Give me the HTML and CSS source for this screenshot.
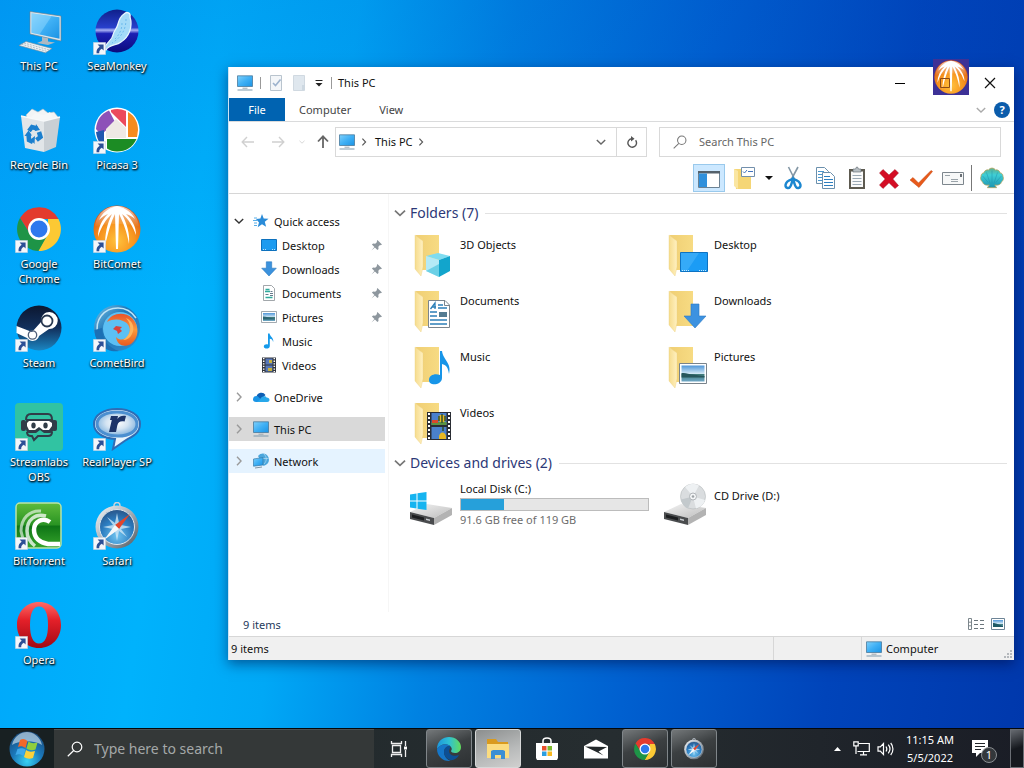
FILE: index.html
```html
<!DOCTYPE html>
<html lang="en">
<head>
<meta charset="utf-8">
<meta name="viewport" content="width=device-width, initial-scale=1">
<title>This PC</title>
<link rel="stylesheet" href="styles.css">
</head>
<body>
<svg class="sprites" aria-hidden="true">
  <defs>
    <linearGradient id="gScreen" x1="0" y1="0" x2="1" y2="1"><stop offset="0" stop-color="#7fd0fb"/><stop offset=".5" stop-color="#3fb0f5"/><stop offset="1" stop-color="#1c93e4"/></linearGradient>
    <linearGradient id="gFolder" x1="0" y1="0" x2="1" y2="0"><stop offset="0" stop-color="#f0cf74"/><stop offset="1" stop-color="#f7db83"/></linearGradient>
    <linearGradient id="gFlap" x1="0" y1="0" x2="1" y2="0"><stop offset="0" stop-color="#f6dc8d"/><stop offset="1" stop-color="#fff0c0"/></linearGradient>
    <radialGradient id="gComet" cx=".5" cy=".75" r=".75"><stop offset="0" stop-color="#ffc23c"/><stop offset=".5" stop-color="#f7941f"/><stop offset="1" stop-color="#d0480f"/></radialGradient>
    <linearGradient id="gGlow" x1="0" y1="0" x2="0" y2="1"><stop offset="0" stop-color="#fff" stop-opacity=".75"/><stop offset="1" stop-color="#fff" stop-opacity="0"/></linearGradient>
    <linearGradient id="gSea" x1="0" y1="0" x2="0" y2="1"><stop offset="0" stop-color="#0f1f8a"/><stop offset=".42" stop-color="#2840cc"/><stop offset=".48" stop-color="#a9b2f4"/><stop offset=".56" stop-color="#1c1fb4"/><stop offset="1" stop-color="#0b0a7c"/></linearGradient>
    <linearGradient id="gSteam" x1="0" y1="0" x2="0" y2="1"><stop offset="0" stop-color="#0c1730"/><stop offset=".5" stop-color="#12305c"/><stop offset="1" stop-color="#1b86c2"/></linearGradient>
    <linearGradient id="gOpera" x1="0" y1="0" x2="0" y2="1"><stop offset="0" stop-color="#ff6a66"/><stop offset=".4" stop-color="#e32029"/><stop offset="1" stop-color="#a00914"/></linearGradient>
    <linearGradient id="gBt" x1="0" y1="0" x2="0" y2="1"><stop offset="0" stop-color="#5ebb3c"/><stop offset=".48" stop-color="#2a9423"/><stop offset=".52" stop-color="#0e7516"/><stop offset="1" stop-color="#37a52c"/></linearGradient>
    <radialGradient id="gReal" cx=".5" cy=".45" r=".55"><stop offset="0" stop-color="#ffffff"/><stop offset=".5" stop-color="#d4e4f2"/><stop offset="1" stop-color="#7fb2de"/></radialGradient>
    <radialGradient id="gSaf" cx=".5" cy=".75" r=".75"><stop offset="0" stop-color="#6fc4f0"/><stop offset=".6" stop-color="#2b7cc0"/><stop offset="1" stop-color="#2a5588"/></radialGradient>
    <linearGradient id="gMetal" x1="0" y1="0" x2="1" y2="1"><stop offset="0" stop-color="#f6f8fa"/><stop offset=".5" stop-color="#a6aeb6"/><stop offset="1" stop-color="#4c545c"/></linearGradient>
    <linearGradient id="gBird" x1="0" y1="0" x2="1" y2="1"><stop offset="0" stop-color="#7ac4ea"/><stop offset=".4" stop-color="#1f78b8"/><stop offset="1" stop-color="#2f8fd0"/></linearGradient>
    <linearGradient id="gFlame" x1="0" y1="0" x2="0" y2="1"><stop offset="0" stop-color="#e8542a"/><stop offset=".5" stop-color="#fb9a3c"/><stop offset="1" stop-color="#e85a20"/></linearGradient>
    <radialGradient id="gStart" cx=".5" cy=".85" r=".85"><stop offset="0" stop-color="#39d2f4"/><stop offset=".5" stop-color="#1a76b8"/><stop offset="1" stop-color="#1a4a7a"/></radialGradient>
    <linearGradient id="gDrive" x1="0" y1="0" x2="1" y2="1"><stop offset="0" stop-color="#f3f3f3"/><stop offset="1" stop-color="#bdbdbd"/></linearGradient>
    <linearGradient id="gShell" x1="0" y1="0" x2="0" y2="1"><stop offset="0" stop-color="#5fae8c"/><stop offset=".35" stop-color="#3fcfd6"/><stop offset="1" stop-color="#1d93b0"/></linearGradient>
    <linearGradient id="gEdge" x1="0" y1="0" x2="1" y2="0"><stop offset="0" stop-color="#1c96dc"/><stop offset=".5" stop-color="#2fc0d4"/><stop offset="1" stop-color="#62dc5c"/></linearGradient>
    <linearGradient id="gPhoto" x1="0" y1="0" x2="0" y2="1"><stop offset="0" stop-color="#4f96d8"/><stop offset=".5" stop-color="#cfe6f4"/><stop offset=".55" stop-color="#3f7a78"/><stop offset="1" stop-color="#6fa8c8"/></linearGradient>
  </defs>

  <symbol id="shortcut" viewBox="0 0 14 14"><path fill="#f4f6fa" stroke="#c8d0dc" stroke-width=".6" d="M.5.5h13v13H.5z"/><path fill="#2c4f96" d="M5 2.800h6.400v6.400L9.500 7.300C7.600 8.200 6.600 9.500 6.700 12H3.800C3.500 8.800 4.800 6.800 7.200 5.200z"/></symbol>

  <symbol id="pc-desk" viewBox="0 0 48 48">
    <path fill="#dfe6ea" stroke="#6c7a86" stroke-width=".6" d="M15 4.500 46 9v25L15 27z"/><path fill="url(#gScreen)" d="m16.500 6.300 28 4v21.500l-28-6z"/><path fill="#9adcff" opacity=".45" d="m16.500 6.300 20 2.900-12 18.300-8-1.700z"/>
    <path fill="#aeb9c2" d="m27 30 6 1.300v3.200l7 1-7 2.500-11-2 5-2z"/><path fill="#eef2f4" stroke="#7e8c98" stroke-width=".6" d="m11 34.500 26 7-6.500 4.300L4 38.500z"/><path fill="none" stroke="#93a2ae" stroke-width=".7" stroke-dasharray="2 1" d="m9 36 25.500 7M6.500 37.200 32 44.400"/>
  </symbol>
  <symbol id="bin" viewBox="0 0 48 48">
    <path fill="#f2f4f5" stroke="#b4bcc2" stroke-width=".6" d="m11 9 6-6 6 3 5-3 5 4 6-1 4 5-5 5H14z"/><path fill="#e1e5e8" d="M6 10 10 42l19 4V15z"/><path fill="#c9cfd4" d="m29 15 16-4-4 30-12 5z"/><path fill="none" stroke="#f7f9fa" stroke-width="1.500" d="m6 10 23 5 16-4"/><path fill="#f5f7f8" d="m15 12 5-5 9 2 6-3 3 6-9 2z"/>
    <g fill="none" stroke="#1b7fce" stroke-width="4.500"><path d="m14 25 3-4 5 1.500"/><path d="m24 26 1.500 5-4 3"/><path d="m18 36-4-2-.5-6"/></g>
    <path fill="#1b7fce" d="m21 18 4 6-5 1zM20 30l-.5 8-4-4.500zM9.500 30l4-5.500 3.500 5z"/>
  </symbol>
  <symbol id="seamonkey" viewBox="0 0 48 48"><circle cx="24" cy="24" r="21.500" fill="url(#gSea)"/><path fill="#a4daf8" stroke="#e9f7ff" stroke-width="1.300" d="M31 7c3-3 7-1 6 3 3 10-1 20-9 25-5 4-12 2-15 8l-2-1c2-7 8-8 9-14 1-5 4-6 5-11 1-4 3-8 6-10z"/><path fill="none" stroke="#5fb2ea" stroke-width=".8" stroke-dasharray="2 2" d="M33 12c0 10-4 18-14 24M29 16c0 7-3 12-7 16"/></symbol>
  <symbol id="picasa" viewBox="0 0 48 48"><circle cx="24" cy="24" r="22.500" fill="#fff"/><path fill="#8d51b8" d="M3 23C3.500 14 9 7 16 4.500l6 11.500L8 29z"/><path fill="#ec4a5c" d="M18 4a21 21 0 0 1 15 1v16L18 6z"/><path fill="#f58b1f" d="M35 6c7 4 10 11 10 18l-1 7h-9z"/><path fill="#1c8c24" d="M43.500 33C40 41 33 45.500 24 45.500c-4 0-7-1-10-3V33z"/><path fill="#2057b0" d="M3 26c1 7 3 11 8 15V24z"/><path fill="#efe9e4" d="m23 13 10 9v10H13V23z"/></symbol>
  <symbol id="chrome" viewBox="0 0 48 48"><path fill="#e33b2e" d="M5 13A22 22 0 0 1 43.500 14H24v10l-9 5z"/><path fill="#fcc934" d="M43.500 14A22 22 0 0 1 23 46l10-17V14z"/><path fill="#1e9447" d="M5 13a22 22 0 0 0 18.500 33L33 29l-9 4-9-4z"/><circle cx="24" cy="24" r="11" fill="#fff"/><circle cx="24" cy="24" r="8.500" fill="#2d78ee"/></symbol>
  <symbol id="bitcomet" viewBox="0 0 48 48"><circle cx="24" cy="24" r="23.500" fill="url(#gComet)"/><path fill="url(#gGlow)" d="M2 22C3 9 13 1 24 1s21 8 22 21c-8-4-36-4-44 0z"/><path fill="#fff" d="M24 1C15 3 9 8 6 15c3-3 6-5 9-6C9 15 5 22 5 32 8 22 13 14 19 9c-5 10-7 20-7 32 3-13 6-24 10-32l1 35h2l1-35c4 8 8 18 10 30 1-10-2-20-7-30 7 5 11 13 14 21 0-9-4-15-10-21 4 1 7 3 9 5C39 8 33 3 24 1z"/></symbol>
  <symbol id="steam" viewBox="0 0 48 48"><circle cx="24" cy="24" r="22.500" fill="url(#gSteam)"/><path fill="#fff" d="M1.500 22 17 28l9-10c0-7 4-10 8.500-10A8.500 8.500 0 0 1 34 25l-10 7c-1 5-8 7-12 2L1.500 29z"/><circle cx="32" cy="17" r="5.500" fill="#fff" stroke="#283850" stroke-width="1.800"/><circle cx="17.500" cy="31" r="4.200" fill="none" stroke="#52617a" stroke-width="1.300"/></symbol>
  <symbol id="cometbird" viewBox="0 0 48 48"><circle cx="24" cy="24" r="23" fill="url(#gBird)"/><circle cx="27" cy="25" r="17" fill="#5cc0f4"/><path fill="none" stroke="#bfe4f6" stroke-width="1.500" d="M5 30C1 16 11 4 25 4c8 0 14 4 18 10"/><path fill="#1c70b4" d="M9 24c0 12 7 20 17 23C14 49 2 40 1.500 26z"/><path fill="url(#gFlame)" d="M14 18C18 9 31 7 39 14c8 8 7 20-1 26-7 4-14 1-15-7 4 4 9 3 12-1 4-6 1-13-5-15-5-2-10-2-16 1z"/><path fill="#d8423c" d="m20 25 3-3 6 1-2 2 2 2-4 3-1-3z"/><path fill="#ffb45c" d="M33 14c7 3 9 10 6 16-2 4-5 6-9 6 8-5 10-14 3-22z"/></symbol>
  <symbol id="slobs" viewBox="0 0 48 48"><rect width="48" height="48" rx="4" fill="#31c3a2"/><path fill="none" stroke="#303c48" stroke-width="2" d="M11 17c0-4 2-6 5-6h17c3 0 4 2 4 6M12 29c0 3 2 4 4 4h1l2 4 4-4h10c3 0 4-2 4-4"/><path fill="#303c48" d="M12 16h24c2 0 3 1 3 3v6c0 3-2 5-5 5h-5l-4-3-4 3h-6c-3 0-4-2-4-5v-6c0-2 0-3 1-3z"/><rect x="6" y="17" width="5" height="11" rx="2" fill="#303c48"/><rect x="37" y="17" width="5" height="11" rx="2" fill="#303c48"/><path fill="#fff" d="M14 18h20l3 2v3l-3 4h-6l-4-3-4 3h-6l-2-4v-3z"/><ellipse cx="18.500" cy="22.500" rx="2.200" ry="3" fill="#303c48"/><ellipse cx="30.500" cy="22.500" rx="2.200" ry="3" fill="#303c48"/></symbol>
  <symbol id="realplayer" viewBox="0 0 48 48"><path fill="#e9f4fc" stroke="#2f6cb4" stroke-width="2" d="M24 6c13 0 23 6 23 15 0 9-7 12-14 16l-13 9 2-10C9 35 1 29 1 21 1 12 11 6 24 6z"/><path fill="url(#gReal)" stroke="#4b8fd0" stroke-width="3" d="M24 9c12 0 20 5 20 12s-7 12-19 12S4 28 4 21 12 9 24 9z"/><path fill="#1c3368" d="M18 13h7l-.6 3c2-3 5-3.700 8.600-3l-1.400 5.500c-4-.8-6.300 0-7.300 4L23 29h-7l2.800-12H17z"/></symbol>
  <symbol id="bittorrent" viewBox="0 0 48 48"><rect x="1" y="1" width="45" height="45" rx="4" fill="url(#gBt)" stroke="#b9e4a8" stroke-width="1.500"/><g fill="none" stroke="#fff"><path stroke-width="4.500" d="M35 20c-7-5-16-1-16 8 0 8 6 13 14 14h12"/><path stroke-width="3.500" opacity=".75" d="M31 14C20 11 12 18 12 29c0 7 3 11 8 15"/><path stroke-width="3" opacity=".6" d="M26 9C14 8 6 17 6 29l2 8"/></g></symbol>
  <symbol id="safari" viewBox="0 0 48 48"><circle cx="24" cy="3.500" r="3" fill="none" stroke="#c9d2da" stroke-width="1.500"/><circle cx="24" cy="25" r="21.500" fill="url(#gMetal)"/><circle cx="24" cy="25" r="17.500" fill="url(#gSaf)" stroke="#dfe7ee"/><path fill="#cfe7f6" opacity=".8" d="m24 11 2 10 8-6-6 8 10 2-10 2 6 8-8-6-2 10-2-10-8 6 6-8-10-2 10-2-6-8 8 6z"/><path fill="#e3452c" d="m37 12-11 15-4-4z"/><path fill="#f5f8fa" d="m11 38 11-15 4 4z"/></symbol>
  <symbol id="opera" viewBox="0 0 48 48"><path fill="url(#gOpera)" fill-rule="evenodd" d="M24 1C11 1 2 11 2 24s9 23 22 23 22-10 22-23S37 1 24 1zm0 4.500c6 0 9 7 9 18.500s-3 18.500-9 18.500-9-7-9-18.500 3-18.500 9-18.500z"/></symbol>

  <symbol id="monitor" viewBox="0 0 18 16"><path fill="url(#gScreen)" stroke="#4a7a9c" stroke-width=".8" d="M1.500.8h15v10.700h-15z"/><path stroke="#9aa6ae" d="M6.500 13.200h5"/><path stroke="#7d99ac" d="M1.500 15h15"/></symbol>
  <symbol id="star" viewBox="0 0 16 16"><path fill="#2a8bd8" d="m9 1 1.700 4.500 4.800.3-3.700 3 1.300 4.900L9 11.200l-4.300 3L6 9.500 3 6l4.400-.5z"/><path stroke="#58aee8" d="M1 5h3M0 7.500h4M1 10h3M1 12.500h3"/></symbol>
  <symbol id="s-desktop" viewBox="0 0 16 16"><path fill="#1c9bf0" stroke="#0d71bd" d="M.5 2.500h15v11H.5z"/><path stroke="#bfe3fb" stroke-dasharray="1 1" d="M2 12.500h3M11 12.500h3"/></symbol>
  <symbol id="s-down" viewBox="0 0 16 16"><path fill="#3b92dd" stroke="#2878c0" stroke-width=".6" d="M5.300.8h5.400v6.400h4.600L8 15 .7 7.200h4.600z"/></symbol>
  <symbol id="s-doc" viewBox="0 0 16 16"><path fill="#fff" stroke="#8a9096" stroke-width=".8" d="M2.500.5h8l3 3v12h-11z"/><path stroke="#2faa9c" stroke-width="1.300" d="M4.500 4.500h4M4 6.500h5M4.500 12.500h7"/><path stroke="#667a8c" d="M4.500 9.500h3M9 8.500h3M9 10.500h3M9.500 6.500h2"/></symbol>
  <symbol id="s-pic" viewBox="0 0 16 16"><path fill="#fff" stroke="#8a949c" stroke-width=".8" d="M.5 2.500h15v11H.5z"/><path fill="url(#gPhoto)" d="M2 4h12v8H2z"/><path fill="#2c6674" d="M2 7.500c3 0 4 1 12 2v1H2z"/></symbol>
  <symbol id="s-music" viewBox="0 0 16 16"><path fill="#159aeb" d="M7 .5h1.600c.3 3 4.600 4.500 3.500 8.500-.4-2.200-1.600-3-3.300-3.200V13c0 3.400-6 3.300-6 .5 0-2 2.400-2.800 4.200-2z"/></symbol>
  <symbol id="s-video" viewBox="0 0 16 16"><path fill="#30343c" d="M1 .5h14v15H1z"/><path stroke="#fff" stroke-width="1.500" stroke-dasharray="1.300 1.300" d="M2.700 1v14M13.300 1v14"/><path fill="#5878b8" d="M4.500 1.500h7v6h-7zM4.500 8.500h7v6h-7z"/><path fill="#c8b23c" d="M8 3h3v3H8zM7 11h4v3H7z"/></symbol>
  <symbol id="onedrive" viewBox="0 0 18 16"><path fill="#0e5fb4" d="M4.500 7.500A5 5 0 0 1 13.500 6l-5 5z"/><path fill="#1a94e6" d="M1 10.500C1 7.800 3 6.500 5.500 7l6 6H4c-2 0-3-1-3-2.500z"/><path fill="#28a8ea" d="M8 10.500c1.500-4 6-4 6.500-2 2 0 3 1 3 2.500 0 1.300-1 2-2.300 2H5z"/></symbol>
  <symbol id="network" viewBox="0 0 18 16"><path fill="#4ba6dc" d="M6 3c3-4 9-3 10.500 1.500s-1 7-5 8.500z"/><path stroke="#b7def4" fill="none" stroke-width=".7" d="M9 5.500h7.500M12 1c3 3 3 7 0 10"/><path fill="url(#gScreen)" stroke="#3b7ba8" stroke-width=".7" d="M1.500 6 11 4.500V12l-9.500 1.200z"/><path stroke="#8395a2" d="m3 15 7-1"/></symbol>
  <symbol id="pin" viewBox="0 0 12 12"><path fill="#8e979e" d="m7 0 5 5-1.500.7-.7-.3-1.800 2 .2 2.300L7 11 4.300 8.300.5 11.500 3.700 7.700 1 5l1.300-1.200 2.300.2 2-1.800-.3-.8z"/></symbol>
  <symbol id="chev-r" viewBox="0 0 10 10"><path fill="none" stroke="currentColor" stroke-width="1.400" d="m3 .8 4 4.200-4 4.200"/></symbol>
  <symbol id="chev-d" viewBox="0 0 10 10"><path fill="none" stroke="currentColor" stroke-width="1.400" d="m.8 3 4.200 4 4.200-4"/></symbol>
  <symbol id="glass" viewBox="0 0 16 16"><circle cx="10" cy="6" r="4.800" fill="none" stroke="currentColor" stroke-width="1.200"/><path stroke="currentColor" stroke-width="1.200" d="M6.700 9.500.8 15.200"/></symbol>

  <symbol id="folder" viewBox="0 0 48 48"><path fill="url(#gFolder)" d="M7 4h23v35H12z"/><path fill="url(#gFlap)" stroke="#ecd082" stroke-width=".4" d="m6 4 8 6v26l-2 9-6-7z"/></symbol>
  <symbol id="f-3d" viewBox="0 0 48 48"><use href="#folder"/><path fill="#7fdcf0" d="m17 25 12-3 12 3-11 4z"/><path fill="#b4eaf6" d="m17 25 13 4v17l-13-6z"/><path fill="#12a5cc" d="m41 25-11 4v17l11-6z"/><path fill="#4cc4e0" opacity=".7" d="m17 40 13-7v13z"/></symbol>
  <symbol id="f-doc" viewBox="0 0 48 48"><use href="#folder"/><path fill="#fff" stroke="#7b858d" d="M19.500 13.500H36l4.500 4.500v22.500h-21z"/><path fill="none" stroke="#7b858d" d="M35.500 13.500v5h5"/><path fill="none" stroke="#2c7fb8" stroke-width="1.300" d="m21.500 22 4.500-6v6m-3-2h4M29 18h5M29 21h9M21 25h7M21 29h7M21 33h17M21 37h17"/><path fill="#557c92" d="M30 25h8v5h-8z"/></symbol>
  <symbol id="f-music" viewBox="0 0 48 48"><use href="#folder"/><path fill="#1795e8" d="M31 8h2c1 9 10 12 7 23-1-7-3-9-7-10v14c0 7-13 9-13 2 0-5 6-7 11-5z"/></symbol>
  <symbol id="f-video" viewBox="0 0 48 48"><use href="#folder"/><path fill="#2a2d34" d="M18 13h24v28H18z"/><path stroke="#fff" stroke-width="2" stroke-dasharray="2 2" d="M20 14v26M40 14v26"/><path fill="#4a80cc" d="M22.500 14h15v12h-15zM22.500 28h15v12h-15z"/><path fill="#5b9444" d="M22.500 23h15v3h-15z"/><circle cx="33" cy="19.500" r="3.800" fill="#e8b822"/><path stroke="#31502c" stroke-width="1.500" d="M33 15v9M30 17v5M36 17v5M34 28v4"/><path fill="#d8482c" d="M23 21h6v3h-6z"/><path fill="#e8b822" d="M30 38c0-6 7-6 7 0v2h-7z"/></symbol>
  <symbol id="f-desk" viewBox="0 0 48 48"><use href="#folder"/><path fill="#1b9cf5" stroke="#0d72c2" d="M17.500 21.500h27v19h-27z"/><path fill="#4fb7fb" opacity=".5" d="M18 22h18L24 40h-6z"/><path stroke="#c9e9fc" stroke-dasharray="1 1" d="M19 39.500h8M36 39.500h8"/></symbol>
  <symbol id="f-down" viewBox="0 0 48 48"><use href="#folder"/><path fill="#3d92e0" stroke="#2c78c4" stroke-width=".6" d="M28 17h8v12h7L32 41 21 29h7z"/></symbol>
  <symbol id="f-pic" viewBox="0 0 48 48"><use href="#folder"/><path fill="#fff" stroke="#79838b" d="M16.500 20.500h27v20h-27z"/><path fill="url(#gPhoto)" d="M18.500 22.500h23v16h-23z"/><path fill="#27575c" d="M18.500 30c6 0 10 2 23 3v1.500h-23z"/></symbol>
  <symbol id="drive-body" viewBox="0 0 48 48"><path fill="url(#gDrive)" d="m1 31 17-8 25 4-18 10z"/><path fill="#4a4c4e" d="m1 31 24 6v7L1 38z"/><path fill="#b3b3b3" d="m25 37 18-10v7L25 44z"/><path fill="#1c1e20" d="m3 33.500 12 3v3l-12-3z"/><path fill="#c8ccd0" d="m17 37.500 4 1v1.500l-4-1z"/></symbol>
  <symbol id="d-local" viewBox="0 0 48 48"><use href="#drive-body"/><path fill="#16b4f0" d="m1 13.500 6.500-1v7H1zM8.500 12.300l9-1.300v8.500h-9zM1 20.500h6.500v7L1 26.500zM8.500 20.500h9V29l-9-1.300z"/></symbol>
  <symbol id="d-cd" viewBox="0 0 48 48"><use href="#drive-body"/><circle cx="30" cy="15.500" r="12.500" fill="#dadddf" stroke="#b4b8bb" stroke-width=".6"/><path fill="#eef1f3" d="M30 15.500 22 6a12.500 12.500 0 0 1 14-1.500zM30 15.500 42 19a12.500 12.500 0 0 1-9 8.500z"/><path fill="#c3c9cc" d="m30 15.500-12 3c1 5 4 8 7 9z"/><circle cx="30" cy="15.500" r="3.500" fill="#f4f6f7" stroke="#b0b4b8"/><circle cx="30" cy="15.500" r="1.300" fill="#9da2a6"/></symbol>

  <symbol id="t-pane" viewBox="0 0 24 24"><path fill="#fff" stroke="#6b8294" d="M1.500 5.500h21v16h-21z"/><path fill="#54616b" d="M1 5h22v2.500H1z"/><path fill="#2f90dc" d="M2 7.500h8V21H2z"/></symbol>
  <symbol id="t-folder" viewBox="0 0 24 24"><path fill="#f5d676" d="M1 3h7v7h10v13H3z"/><path fill="#fae6a2" d="m1 3 4 2v18l-4-3z"/><path fill="#fff" stroke="#7390ac" d="M8.500 1.500h13v9h-13z"/><path fill="none" stroke="#4474c0" d="m10 5.500 1.500 1.500L14 4M15 5.500h5"/></symbol>
  <symbol id="t-cut" viewBox="0 0 24 24"><path fill="none" stroke="#8497a5" stroke-width="1.600" d="M7.500 1 14 14M17 1l-7 13"/><path fill="none" stroke="#1c87d0" stroke-width="2.400" d="M12 13c-3 1-7 2-7.500 6-.2 3 3 4 4.500 2 1.500-1.700 1.500-4 3-8 1.500 4 1.500 6.300 3 8 1.500 2 4.700 1 4.500-2-.5-4-4.500-5-7.500-6z"/></symbol>
  <symbol id="t-copy" viewBox="0 0 24 24"><path fill="#fff" stroke="#6b90ad" d="M3.500 1.500h8l4 4v12h-12z"/><path stroke="#4a98d0" d="M5 5.500h6M5 8.500h8M5 11.500h8M5 14.500h8"/><path fill="#fff" stroke="#6b90ad" d="M9.500 6.500h8l4 4v12h-12z"/><path stroke="#2c7fc0" d="M11 10.500h6M11 13.500h9M11 16.500h9M11 19.500h9"/></symbol>
  <symbol id="t-paste" viewBox="0 0 24 24"><path fill="#5d5a50" d="M4 3h16v20H4z"/><path fill="#fafafa" d="M6 5.500h12V21H6z"/><path fill="#b8bfc4" stroke="#5d656b" stroke-width=".6" d="M8 3h2.500l1-2h1l1 2H16v3H8z"/><path stroke="#9ba9b4" d="M7.500 9.500h9M7.500 12.500h9M7.500 15.500h9M7.500 18.500h9"/></symbol>
  <symbol id="t-del" viewBox="0 0 24 24"><path fill="#d40d24" stroke="#a00c20" stroke-width=".5" d="M6 3.500 12 9l6-5.500L21.500 7l-5.700 6 5.700 6.500-3.500 3-6-5.700-6 5.700L2.500 19l5.700-6-5.700-6z"/></symbol>
  <symbol id="t-ok" viewBox="0 0 24 24"><path fill="#e85a1a" stroke="#c04410" stroke-width=".5" d="M1 14 4 11.500l5.500 5.500L22 4.500l1.500 1L10 21.500z"/></symbol>
  <symbol id="t-mail" viewBox="0 0 24 24"><path fill="#f7f8f8" stroke="#7d868d" d="M1.500 6.500h21v12h-21z"/><path stroke="#9aa3a9" d="M4 9.500h5M10 13.500h7M10 15.500h7"/><path fill="#6a7076" d="M19 8h2v3h-2z"/></symbol>
  <symbol id="t-shell" viewBox="0 0 26 26"><path fill="url(#gShell)" stroke="#b9a45c" stroke-width=".8" d="m8 23.500 2-3c-4 1-7-1-7-3-2-1-3-4-2-6 0-3 2-4 3-4 1-3 4-4 5-3 2-3 6-3 8 0 1-1 4 0 5 3 1 0 3 1 3 4 1 2 0 5-2 6 0 2-3 4-7 3l2 3z"/><path stroke="#1c8fa8" fill="none" stroke-width=".7" opacity=".7" d="M13 19V5M11 19 7 7M15 19l4-12M9 18l-6-7M17 18l6-7"/></symbol>
</svg>

<main class="desktop">
  <nav class="shortcuts" aria-label="Desktop icons">
    <a class="shortcut" href="#"><svg class="shortcut-art"><use href="#pc-desk"/></svg>This PC</a>
    <a class="shortcut" href="#"><svg class="shortcut-art"><use href="#bin"/></svg>Recycle Bin</a>
    <a class="shortcut" href="#"><svg class="shortcut-art"><use href="#chrome"/></svg><svg class="arrow"><use href="#shortcut"/></svg>Google Chrome</a>
    <a class="shortcut" href="#"><svg class="shortcut-art"><use href="#steam"/></svg><svg class="arrow"><use href="#shortcut"/></svg>Steam</a>
    <a class="shortcut" href="#"><svg class="shortcut-art"><use href="#slobs"/></svg><svg class="arrow"><use href="#shortcut"/></svg>Streamlabs OBS</a>
    <a class="shortcut" href="#"><svg class="shortcut-art"><use href="#bittorrent"/></svg><svg class="arrow"><use href="#shortcut"/></svg>BitTorrent</a>
    <a class="shortcut" href="#"><svg class="shortcut-art"><use href="#opera"/></svg><svg class="arrow"><use href="#shortcut"/></svg>Opera</a>
    <a class="shortcut" href="#"><svg class="shortcut-art"><use href="#seamonkey"/></svg><svg class="arrow"><use href="#shortcut"/></svg>SeaMonkey</a>
    <a class="shortcut" href="#"><svg class="shortcut-art"><use href="#picasa"/></svg><svg class="arrow"><use href="#shortcut"/></svg>Picasa 3</a>
    <a class="shortcut" href="#"><svg class="shortcut-art"><use href="#bitcomet"/></svg><svg class="arrow"><use href="#shortcut"/></svg>BitComet</a>
    <a class="shortcut" href="#"><svg class="shortcut-art"><use href="#cometbird"/></svg><svg class="arrow"><use href="#shortcut"/></svg>CometBird</a>
    <a class="shortcut" href="#"><svg class="shortcut-art"><use href="#realplayer"/></svg><svg class="arrow"><use href="#shortcut"/></svg>RealPlayer SP</a>
    <a class="shortcut" href="#"><svg class="shortcut-art"><use href="#safari"/></svg><svg class="arrow"><use href="#shortcut"/></svg>Safari</a>
  </nav>

  <section class="window" aria-label="This PC">
    <header class="titlebar">
      <svg class="icon-pc"><use href="#monitor"/></svg>
      <span class="bar"></span>
      <button class="quick" aria-label="Properties"><svg width="14" height="16" viewBox="0 0 14 16"><path fill="#f3f6f9" stroke="#b9c4ce" d="M1.500.5h11v15h-11z"/><path fill="none" stroke="#9db3ce" stroke-width="1.600" d="m4 8 2.500 2.500 5-6"/></svg></button>
      <button class="quick" aria-label="New folder"><svg width="14" height="16" viewBox="0 0 14 16"><path fill="#dfe7ee" stroke="#d0d9e1" d="M1.500.5h11v15h-11z"/><path fill="#cdd8e1" d="M10 10h3v5h-3z"/></svg></button>
      <button class="quick quick-more" aria-label="Customize toolbar"><svg width="8" height="8" viewBox="0 0 8 8"><path stroke="#222" d="M.5 1.500h7"/><path fill="#222" d="M.5 4h7L4 7.500z"/></svg></button>
      <span class="bar"></span>
      <h1 class="title">This PC</h1>
      <div class="controls">
        <button class="control" aria-label="Minimize"><svg width="10" height="10" viewBox="0 0 10 10"><path stroke="#000" d="M0 5.500h10"/></svg></button>
        <button class="control control-max" aria-label="Maximize"><span class="dropzone"><svg width="34" height="34"><use href="#bitcomet"/></svg></span><svg class="max-glyph" width="10" height="10" viewBox="0 0 10 10"><path fill="none" stroke="#8a4a18" d="M.5.5h9v9h-9z"/></svg></button>
        <button class="control" aria-label="Close"><svg width="12" height="12" viewBox="0 0 12 12"><path stroke="#111" stroke-width="1.200" d="m1 1 10 10M11 1 1 11"/></svg></button>
      </div>
    </header>

    <div class="tabs">
      <button class="tab tab-file">File</button>
      <button class="tab">Computer</button>
      <button class="tab">View</button>
      <div class="tabs-end">
        <button class="plain faint" aria-label="Expand ribbon"><svg width="10" height="10"><use href="#chev-d"/></svg></button>
        <button class="plain help" aria-label="Help">?</button>
      </div>
    </div>

    <div class="navbar">
      <button class="step off" aria-label="Back"><svg width="14" height="12" viewBox="0 0 14 12"><path fill="none" stroke="currentColor" stroke-width="1.400" d="M13 6H1.500M6 1 1.200 6 6 11"/></svg></button>
      <button class="step off" aria-label="Forward"><svg width="14" height="12" viewBox="0 0 14 12"><path fill="none" stroke="currentColor" stroke-width="1.400" d="M1 6h11.500M8 1l4.800 5L8 11"/></svg></button>
      <button class="step step-small off" aria-label="Recent"><svg width="6" height="6"><use href="#chev-d"/></svg></button>
      <button class="step step-up" aria-label="Up"><svg width="12" height="13" viewBox="0 0 12 13"><path fill="none" stroke="currentColor" stroke-width="1.800" d="M6 13V1.500M1 6.500 6 1.300l5 5.200"/></svg></button>
      <div class="address">
        <svg class="icon-pc"><use href="#monitor"/></svg>
        <svg class="sep" width="8" height="8"><use href="#chev-r"/></svg>
        <a class="crumb" href="#">This PC</a>
        <svg class="sep" width="8" height="8"><use href="#chev-r"/></svg>
        <button class="plain history" aria-label="Previous locations"><svg width="10" height="10"><use href="#chev-d"/></svg></button>
        <button class="plain refresh" aria-label="Refresh"><svg width="12" height="12" viewBox="0 0 12 12"><path fill="none" stroke="currentColor" stroke-width="1.400" d="M9.600 4.300A4.300 4.300 0 1 1 5.500 2.700"/><path fill="currentColor" d="M5 0v5.400L8.500 2.700z"/></svg></button>
      </div>
      <label class="find"><svg width="14" height="14"><use href="#glass"/></svg><input type="text" placeholder="Search This PC" aria-label="Search This PC"></label>
    </div>

    <div class="tools" role="toolbar" aria-label="Classic toolbar">
      <button class="tool tool-on" aria-label="Navigation pane"><svg><use href="#t-pane"/></svg></button>
      <button class="tool tool-split" aria-label="Folder options"><svg><use href="#t-folder"/></svg><span class="caret"></span></button>
      <button class="tool" aria-label="Cut"><svg><use href="#t-cut"/></svg></button>
      <button class="tool" aria-label="Copy"><svg><use href="#t-copy"/></svg></button>
      <button class="tool" aria-label="Paste"><svg><use href="#t-paste"/></svg></button>
      <button class="tool" aria-label="Delete"><svg><use href="#t-del"/></svg></button>
      <button class="tool" aria-label="Properties"><svg><use href="#t-ok"/></svg></button>
      <button class="tool" aria-label="Email"><svg><use href="#t-mail"/></svg></button>
      <span class="tool-bar"></span>
      <button class="tool tool-last" aria-label="Classic Shell"><svg><use href="#t-shell"/></svg></button>
    </div>

    <div class="body">
      <nav class="tree" aria-label="Navigation pane">
        <div class="branch">
          <a class="node" href="#"><svg class="twist open"><use href="#chev-d"/></svg><svg class="node-icon"><use href="#star"/></svg>Quick access</a>
          <a class="node leaf" href="#"><svg class="node-icon"><use href="#s-desktop"/></svg>Desktop<svg class="pin"><use href="#pin"/></svg></a>
          <a class="node leaf" href="#"><svg class="node-icon"><use href="#s-down"/></svg>Downloads<svg class="pin"><use href="#pin"/></svg></a>
          <a class="node leaf" href="#"><svg class="node-icon"><use href="#s-doc"/></svg>Documents<svg class="pin"><use href="#pin"/></svg></a>
          <a class="node leaf" href="#"><svg class="node-icon"><use href="#s-pic"/></svg>Pictures<svg class="pin"><use href="#pin"/></svg></a>
          <a class="node leaf" href="#"><svg class="node-icon"><use href="#s-music"/></svg>Music</a>
          <a class="node leaf" href="#"><svg class="node-icon"><use href="#s-video"/></svg>Videos</a>
        </div>
        <a class="node" href="#"><svg class="twist"><use href="#chev-r"/></svg><svg class="node-icon"><use href="#onedrive"/></svg>OneDrive</a>
        <a class="node node-current" href="#"><svg class="twist"><use href="#chev-r"/></svg><svg class="node-icon"><use href="#monitor"/></svg>This PC</a>
        <a class="node node-hover" href="#"><svg class="twist"><use href="#chev-r"/></svg><svg class="node-icon"><use href="#network"/></svg>Network</a>
      </nav>

      <div class="content">
        <section class="group">
          <h2 class="group-title"><svg width="12" height="12"><use href="#chev-d"/></svg>Folders (7)</h2>
          <div class="tiles">
            <a class="tile" href="#"><svg class="tile-icon"><use href="#f-3d"/></svg><span class="tile-text">3D Objects</span></a>
            <a class="tile" href="#"><svg class="tile-icon"><use href="#f-desk"/></svg><span class="tile-text">Desktop</span></a>
            <a class="tile" href="#"><svg class="tile-icon"><use href="#f-doc"/></svg><span class="tile-text">Documents</span></a>
            <a class="tile" href="#"><svg class="tile-icon"><use href="#f-down"/></svg><span class="tile-text">Downloads</span></a>
            <a class="tile" href="#"><svg class="tile-icon"><use href="#f-music"/></svg><span class="tile-text">Music</span></a>
            <a class="tile" href="#"><svg class="tile-icon"><use href="#f-pic"/></svg><span class="tile-text">Pictures</span></a>
            <a class="tile" href="#"><svg class="tile-icon"><use href="#f-video"/></svg><span class="tile-text">Videos</span></a>
          </div>
        </section>
        <section class="group">
          <h2 class="group-title"><svg width="12" height="12"><use href="#chev-d"/></svg>Devices and drives (2)</h2>
          <div class="tiles">
            <a class="tile" href="#"><svg class="tile-icon"><use href="#d-local"/></svg><span class="tile-text tile-drive">Local Disk (C:)<progress class="usage" max="119" value="27.4" aria-label="Space used"></progress><span class="free">91.6 GB free of 119 GB</span></span></a>
            <a class="tile" href="#"><svg class="tile-icon"><use href="#d-cd"/></svg><span class="tile-text tile-cd">CD Drive (D:)</span></a>
          </div>
        </section>
      </div>
    </div>

    <div class="details">
      <span class="count">9 items</span>
      <button class="plain" aria-label="Details view"><svg width="16" height="12" viewBox="0 0 16 12"><path fill="none" stroke="#7c868c" d="M.5.5h3v11h-3zM.5 4.200h3M.5 7.800h3"/><path stroke="#6c767c" stroke-dasharray="4 2" d="M6 2.500h10M6 6.500h10M6 10.500h10"/></svg></button>
      <button class="plain" aria-label="Large icons view"><svg width="14" height="12" viewBox="0 0 14 12"><path fill="#fff" stroke="#6d8496" d="M.5.5h13v11H.5z"/><path fill="url(#gPhoto)" d="M2 2h10v7H2z"/><path fill="#1f5a66" d="M2 5c3 0 4 1 10 3v1H2z"/></svg></button>
    </div>

    <footer class="status">
      <span class="status-cell status-main">9 items</span>
      <span class="status-cell status-mid"></span>
      <span class="status-cell status-zone"><svg class="icon-pc"><use href="#monitor"/></svg>Computer<svg class="grip" width="8" height="8" viewBox="0 0 8 8"><path fill="#b4b8bc" d="M6 0h2v2H6zM3 3h2v2H3zM6 3h2v2H6zM0 6h2v2H0zM3 6h2v2H3zM6 6h2v2H6z"/></svg></span>
    </footer>
  </section>
</main>

<footer class="taskbar">
  <button class="start" aria-label="Start"><svg width="36" height="36" viewBox="0 0 36 36"><circle cx="18" cy="18" r="17.500" fill="url(#gStart)"/><path fill="#dcecf6" opacity=".6" d="M3 14C5 5 12 1 18 1s13 4 15 13c-8-5-22-5-30 0z"/><path fill="#f2672a" d="M11 9c3-2 5-1 7.500 1l-2 7c-3-2-5-2-7.500-1z"/><path fill="#8fce3c" d="M19.500 10.500c3 2 5 2 9 1l-2 7c-3 1-6 1-9-1z"/><path fill="#3fa8ea" d="M8.500 18c3-1 5-1 8 .5l-2 6.500c-3-2-5-2-8-1z"/><path fill="#fcd13a" d="M17 19c3 2 5 2 9 1l-2 7c-3 1-6 1-9-1z"/></svg></button>
  <label class="tb-search"><svg width="16" height="16"><use href="#glass"/></svg><input type="text" placeholder="Type here to search" aria-label="Type here to search"></label>
  <button class="task task-view" aria-label="Task view"><svg width="18" height="16" viewBox="0 0 18 16"><path fill="none" stroke="#eee" stroke-width="1.300" d="M2.500 4.500h8v7h-8zM1.500 0v2.500h10V0M1.500 16v-2.500h10V16M15.500 0v5M15.500 9v7"/><path fill="#fff" d="M14 5.500h3v3h-3z"/></svg></button>
  <button class="task running" aria-label="Edge"><svg width="26" height="26" viewBox="0 0 26 26"><path fill="url(#gEdge)" d="M1 13C1 5 7 1 13 1c7 0 12 5 12 10 0 4-3 6-6 6-2 0-4-1-4-2 1-1 1-3 0-4C12 7 5 7 1 13z"/><path fill="#1576c8" d="M1 13c3-5 10-6 13-3-4 0-6 3-6 6 0 4 3 8 7 9C7 26 1 20 1 13z"/><path fill="#0c4f94" d="M14 10c-4 0-6 3-6 6 0 5 5 9 9 8 3-1 5-3 6-5-5 2-10 0-10-4 0-2 2-3 1-5z"/></svg></button>
  <button class="task running active" aria-label="File Explorer"><svg width="24" height="22" viewBox="0 0 24 22"><path fill="#d99a1e" d="M1 1h9l2 3h10v4H1z"/><path fill="#fbdc80" d="M1 6h22v14H1z"/><path fill="#3c8fd4" d="M5 13l2-1h10l2 1v8h-4v-4H9v4H5z"/></svg></button>
  <button class="task" aria-label="Store"><svg width="24" height="24" viewBox="0 0 24 24"><path fill="none" stroke="#fff" stroke-width="1.500" d="M8 7V4c0-4 8-4 8 0v3"/><path fill="#fff" d="M1 6h22v15l-1 2H2l-1-2z"/><path fill="#e8502c" d="M7 9h4.500v4.500H7z"/><path fill="#7cb82c" d="M12.500 9H17v4.500h-4.500z"/><path fill="#2c9ee0" d="M7 14.500h4.500V19H7z"/><path fill="#f8b820" d="M12.500 14.500H17V19h-4.500z"/></svg></button>
  <button class="task" aria-label="Mail"><svg width="24" height="20" viewBox="0 0 24 20"><path fill="#fff" d="M12 .5 24 7v12.500H0V7z"/><path fill="#22282a" d="m1 7.500 22 .5-8.500 4.500 5 4-8-4z"/></svg></button>
  <button class="task running" aria-label="Chrome"><svg width="24" height="24"><use href="#chrome"/></svg></button>
  <button class="task running" aria-label="Safari"><svg width="22" height="22"><use href="#safari"/></svg></button>
  <div class="tray">
    <button class="plain more" aria-label="Show hidden icons"><svg width="7" height="4" viewBox="0 0 7 4"><path fill="#fff" d="M0 4h7L3.500 0z"/></svg></button>
    <button class="plain" aria-label="Network"><svg width="17" height="15" viewBox="0 0 17 15"><path fill="none" stroke="#fff" stroke-width="1.200" d="M6 2.500h10.300v8H4.500M10.500 10.500v3M7 13.800h7M.8.800h4.400v4H.8zM3 5v8"/></svg></button>
    <button class="plain" aria-label="Volume"><svg width="17" height="14" viewBox="0 0 17 14"><path fill="none" stroke="#fff" stroke-width="1.200" d="M1 4.800h2.300L6.500 1.500v11L3.300 9.200H1zM9 4.500c1 1.500 1 3.500 0 5M11.300 2.700c2 2.500 2 6 0 8.600M13.700 1c3 3.500 3 8.500 0 12"/></svg></button>
    <button class="plain clock"><span>11:15 AM</span><span>5/5/2022</span></button>
    <button class="plain notify" aria-label="Notifications"><svg width="16" height="17" viewBox="0 0 16 17"><path fill="#fff" d="M0 0h16v13H8l-4 4v-4H0z"/><path stroke="#22262a" d="M3 3.500h10M3 6.500h10M3 9.500h6"/></svg><span class="badge">1</span></button>
  </div>
  <button class="peek" aria-label="Show desktop"></button>
</footer>
</body>
</html>
```
FILE: styles.css
```css
* { box-sizing: border-box; }

body {
  margin: 0;
  height: 100vh;
  display: flex;
  flex-direction: column;
  overflow: hidden;
  font: 11px/15px "Noto Sans", sans-serif;
  color: #111;
  background: #0070d8;
}

a { color: inherit; text-decoration: none; }
button, input { font: inherit; color: inherit; margin: 0; }
button { display: flex; align-items: center; justify-content: center; padding: 0; border: 0; background: none; }
svg { display: block; flex: none; }
h1, h2 { margin: 0; font-weight: 400; }
.sprites { position: absolute; width: 0; height: 0; }

/* Desktop */
.desktop {
  position: relative;
  flex: 1;
  min-height: 0;
  background:
    linear-gradient(180deg, rgba(0, 70, 190, .14), rgba(0, 70, 190, 0) 40%),
    linear-gradient(98deg, #00a4fa 0%, #00b2fc 20%, #00a8f6 32%, #0082e2 46%, #0060d0 64%, #0044ba 82%, #0038ac 100%);
}
.shortcuts {
  display: grid;
  grid-auto-flow: column;
  grid-template-rows: repeat(7, 99px);
  grid-auto-columns: 78px;
  width: max-content;
}
.shortcut {
  position: relative;
  display: flex;
  flex-direction: column;
  align-items: center;
  gap: 3px;
  padding: 7px 4px 0;
  text-align: center;
  white-space: nowrap;
  color: #fff;
  text-shadow: 1px 1px 2px #000, 0 1px 2px #000;
}
.shortcut:nth-child(3), .shortcut:nth-child(5) { white-space: normal; }
.shortcut-art { width: 48px; height: 48px; }
.arrow { position: absolute; left: 15px; top: 42px; width: 13px; height: 13px; }

/* Explorer window */
.window {
  position: absolute;
  inset: 67px 10px 68px 228px;
  display: flex;
  flex-direction: column;
  background: #fff;
  border-left: 1px solid #cfe4f4;
  box-shadow: 0 4px 12px rgba(0, 10, 60, .5);
}
.icon-pc { width: 18px; height: 16px; }
.plain { min-width: 10px; }

.titlebar { display: flex; align-items: center; height: 31px; padding-left: 7px; gap: 6px; }
.bar { width: 1px; height: 12px; background: #999; }
.quick { width: 17px; height: 20px; }
.quick-more { width: 12px; }
.title { font-size: 11px; line-height: 15px; }
.controls { display: flex; align-self: stretch; margin-left: auto; padding-right: 2px; }
.control { width: 45px; }
.control-max { position: relative; }
.dropzone {
  position: absolute;
  left: 11px;
  top: -8px;
  padding: 1px;
  background: #3d3196;
}
.max-glyph { position: relative; }

.tabs { display: flex; height: 24px; border-bottom: 1px solid #dadbdc; color: #444; }
.tab { padding: 0 14px; }
.tab-file { width: 56px; background: #0063b1; color: #fff; }
.tabs-end { display: flex; align-items: center; gap: 8px; margin-left: auto; padding-right: 4px; }
.faint { color: #aaa; }
.help { width: 16px; height: 16px; border-radius: 50%; background: #0b5cab; color: #fff; font-weight: 700; }

.navbar { display: flex; align-items: center; height: 41px; padding: 0 13px 2px 4px; }
.step { width: 30px; height: 30px; color: #666; }
.step-small { width: 17px; }
.step-up { width: 25px; }
.off { color: #d0d0d0; }
.address { flex: 308; display: flex; align-items: center; height: 30px; margin-right: 12px; padding-left: 2px; border: 1px solid #d9d9d9; }
.address .sep { margin: 0 7px 0 4px; color: #555; }
.history { align-self: stretch; width: 30px; margin-left: auto; color: #666; }
.refresh { align-self: stretch; width: 30px; border-left: 1px solid #d9d9d9; color: #555; }
.find { flex: 327; display: flex; align-items: center; gap: 12px; height: 30px; padding-left: 13px; border: 1px solid #d9d9d9; color: #777; }
.find input { flex: 1; min-width: 0; padding: 0; border: 0; background: none; outline: 0; }
.find input::placeholder { color: #666; opacity: 1; }

.tools { display: flex; justify-content: flex-end; align-items: center; height: 31px; padding: 0 8px 0 0; border-bottom: 1px solid #d6d6d6; }
.tool { width: 32px; height: 28px; }
.tool svg { width: 24px; height: 24px; }
.tool-on { background: #cce8ff; border: 1px solid #99c9ec; }
.tool-split { width: 52px; gap: 8px; padding-left: 4px; }
.caret { border: 4px solid transparent; border-top-color: #111; border-bottom: 0; }
.tool-bar { width: 1px; height: 26px; margin: 0 6px 0 2px; background: #777; }
.tool-last { width: 28px; }

.body { flex: 1; min-height: 0; display: flex; }
.tree { width: 156px; display: flex; flex-direction: column; gap: 8px; padding-top: 15px; flex: none; }
.node { display: flex; align-items: center; height: 24px; padding-left: 5px; gap: 4px; }
.node-icon { width: 18px; height: 16px; }
.twist { width: 10px; height: 10px; margin-right: 4px; color: #9a9a9a; }
.open { color: #333; }
.leaf { padding-left: 31px; padding-right: 3px; }
.pin { width: 11px; height: 11px; margin-left: auto; }
.node-current { background: #d9d9d9; }
.node-hover { background: #e5f3ff; }

.content { flex: 1; min-width: 0; padding: 7px 7px 0 5px; margin-left: 3px; border-left: 1px solid #f6f6f6; }
.group-title { display: flex; align-items: center; gap: 4px; height: 24px; font-size: 14px; line-height: 20px; color: #2c3877; }
.group-title svg { color: #777; }
.group-title::after { content: ""; flex: 1; height: 1px; margin-left: 3px; background: #e2e2e2; }
.tiles { display: grid; grid-template-columns: repeat(auto-fill, 254px); padding: 2px 0 0 15px; }
.tile { display: flex; gap: 3px; height: 56px; padding-top: 4px; }
.tile-icon { width: 48px; height: 48px; }
.tile-text { padding-top: 6px; }
.tile-drive { display: flex; flex-direction: column; width: 189px; padding-top: 0; }
.tile-cd { padding-top: 7px; }
.usage { appearance: none; width: 100%; height: 13px; margin: 2px 0 1px; border: 1px solid #bcbcbc; }
.usage::-webkit-progress-bar { background: #e6e6e6; }
.usage::-webkit-progress-value { background: #26a0da; }
.free { color: #6d6d6d; }

.details { display: flex; align-items: center; gap: 7px; height: 24px; padding: 0 9px 0 14px; color: #1e395b; }
.count { flex: 1; }
.status { display: flex; height: 24px; background: #f0f0f0; border-top: 1px solid #d7d7d7; }
.status-cell { display: flex; align-items: center; gap: 3px; padding-left: 2px; }
.status-main { flex: 1; }
.status-mid { width: 88px; border-left: 1px solid #d7d7d7; }
.status-zone { width: 153px; padding: 0 2px 0 3px; border-left: 1px solid #d7d7d7; }
.grip { align-self: flex-end; margin: 0 0 2px auto; }

/* Taskbar */
.taskbar { display: flex; height: 40px; flex: none; background: linear-gradient(90deg, #20282a, #262d30 60%, #1a1d26); border-top: 1px solid #05080a; color: #fff; }
.start { width: 54px; background: #182022; }
.tb-search { display: flex; align-items: center; gap: 11px; width: 320px; padding-left: 13px; background: #343838; border-top: 1px solid #4c5052; font-size: 14px; line-height: 20px; }
.tb-search input { flex: 1; min-width: 0; padding: 0; border: 0; background: none; outline: 0; }
.tb-search input::placeholder { color: #a4a8a8; opacity: 1; }
.task { width: 46px; margin-right: 3px; }
.task-view { width: 49px; }
.running { border: 1px solid #80868a; border-radius: 3px; background: linear-gradient(160deg, #74787a, #3c4042 45%, #2c3032); }
.active { border-color: #d6d8d8; background: linear-gradient(160deg, #8b8e8e, #b8baba 60%, #d0d0cf); }
.tray { display: flex; align-items: center; gap: 7px; margin-left: auto; }
.more { margin-right: 4px; }
.clock { flex-direction: column; width: 58px; height: 39px; line-height: 18px; }
.notify { position: relative; width: 40px; height: 39px; margin-right: 4px; }
.notify svg { margin-right: 13px; }
.badge { position: absolute; left: 15px; top: 18px; width: 16px; height: 16px; border: 1px solid #8a8e92; border-radius: 50%; background: #33373b; line-height: 14px; text-align: center; }
.peek { width: 14px; border: 1px solid #6a6e74; background: linear-gradient(160deg, #666a70, #15181e 50%); }
```
